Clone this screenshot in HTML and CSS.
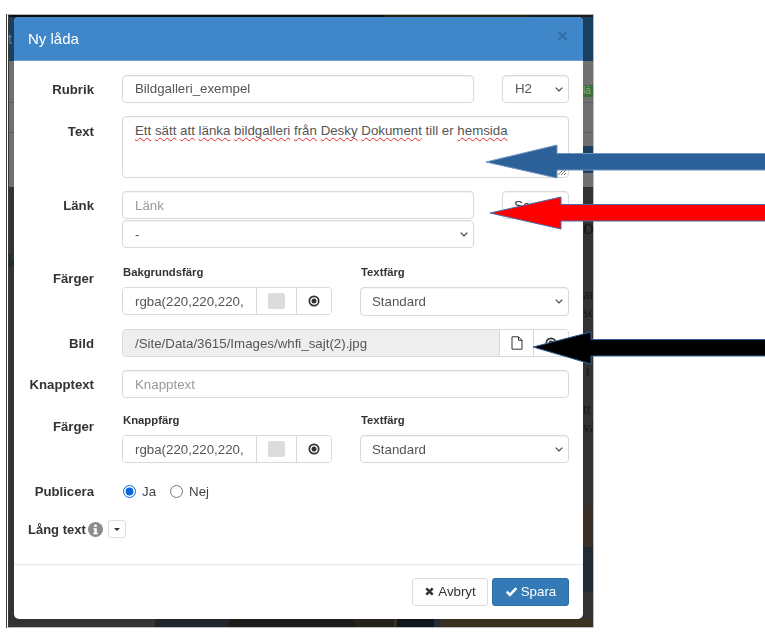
FILE: index.html
```html
<!DOCTYPE html>
<html lang="sv">
<head>
<meta charset="utf-8">
<title>Ny låda</title>
<link rel="stylesheet" href="styles.css">
</head>
<body>
<div class="shot">
  <div class="ghost ghost-green">lä</div>
  <div class="ghost ghost-navy"></div>
  <div class="ghost ghost-line ghost-line-a"></div>
  <div class="ghost ghost-line ghost-line-b"></div>
  <span class="ghost ghost-t ghost-head">t</span>
  <span class="ghost ghost-t ghost-k">k</span>
  <span class="ghost ghost-t ghost-ol">ol</span>
  <span class="ghost ghost-t ghost-an">an</span>
  <span class="ghost ghost-t ghost-sc">sc</span>
  <span class="ghost ghost-t ghost-t1">t</span>
  <span class="ghost ghost-t ghost-tt">tt</span>
  <span class="ghost ghost-t ghost-va">vå</span>

  <div class="modal">
    <header class="modal-head">
      <h1 class="modal-title">Ny låda</h1>
      <span class="close">×</span>
    </header>
    <form class="modal-body">
      <div class="row row-first">
        <label class="lbl">Rubrik</label>
        <div class="split">
          <input class="ctl grow" type="text" value="Bildgalleri_exempel">
          <select class="ctl sel side"><option>H2</option></select>
        </div>
      </div>
      <div class="row">
        <label class="lbl lbl-text">Text</label>
        <div class="ctl area">
          <span class="sq">Ett</span> <span class="sq">sätt</span> <span class="sq">att</span> <span class="sq">länka</span> <span class="sq">bildgalleri</span> <span class="sq">från</span> <span class="sq">Desky</span> <span class="sq">Dokument</span> till er <span class="sq">hemsida</span>
          <svg class="grip" viewBox="0 0 10 10"><path d="M1 9 9 1M4 9 9 4M7 9 9 7" stroke="#777" fill="none"/></svg>
        </div>
      </div>
      <div class="row row-link">
        <label class="lbl">Länk</label>
        <div class="stack">
          <div class="split">
            <input class="ctl grow" type="text" placeholder="Länk">
            <button class="ctl btn side" type="button">Se mer</button>
          </div>
          <div class="split">
            <select class="ctl sel grow"><option>-</option></select>
            <span class="side-gap"></span>
          </div>
        </div>
      </div>
      <div class="row">
        <label class="lbl lbl-col">Färger</label>
        <div class="pair">
          <div class="pair-a">
            <div class="small">Bakgrundsfärg</div>
            <div class="group tall">
              <input class="seg seg-text" type="text" value="rgba(220,220,220,">
              <span class="seg seg-swatch"><i class="swatch"></i></span>
              <span class="seg seg-icon"><svg class="ic" viewBox="0 0 12 12"><circle cx="6" cy="6" r="4.700" fill="none" stroke="#333" stroke-width="1.700"/><circle cx="6" cy="6" r="2.500" fill="#333"/></svg></span>
            </div>
          </div>
          <div class="pair-b">
            <div class="small">Textfärg</div>
            <select class="ctl sel tall"><option>Standard</option></select>
          </div>
        </div>
      </div>
      <div class="row">
        <label class="lbl">Bild</label>
        <div class="group">
          <input class="seg seg-path" type="text" value="/Site/Data/3615/Images/whfi_sajt(2).jpg" disabled>
          <span class="seg seg-file"><svg class="ic-file" viewBox="0 0 12 14"><path d="M1 .8h6.500L11 4.300V13.200H1zM7.500.8V4.300H11" fill="none" stroke="#333"/></svg></span>
          <span class="seg seg-icon"><svg class="ic" viewBox="0 0 12 12"><circle cx="6" cy="6" r="4.700" fill="none" stroke="#333" stroke-width="1.700"/><circle cx="6" cy="6" r="2.500" fill="#333"/></svg></span>
        </div>
      </div>
      <div class="row">
        <label class="lbl">Knapptext</label>
        <input class="ctl" type="text" placeholder="Knapptext">
      </div>
      <div class="row row-shift">
        <label class="lbl lbl-col">Färger</label>
        <div class="pair">
          <div class="pair-a">
            <div class="small">Knappfärg</div>
            <div class="group">
              <input class="seg seg-text" type="text" value="rgba(220,220,220,">
              <span class="seg seg-swatch"><i class="swatch"></i></span>
              <span class="seg seg-icon"><svg class="ic" viewBox="0 0 12 12"><circle cx="6" cy="6" r="4.700" fill="none" stroke="#333" stroke-width="1.700"/><circle cx="6" cy="6" r="2.500" fill="#333"/></svg></span>
            </div>
          </div>
          <div class="pair-b">
            <div class="small">Textfärg</div>
            <select class="ctl sel"><option>Standard</option></select>
          </div>
        </div>
      </div>
      <div class="row row-radio">
        <label class="lbl lbl-radio">Publicera</label>
        <div class="radios">
          <label class="radio"><input type="radio" name="pub" checked> Ja</label>
          <label class="radio"><input type="radio" name="pub"> Nej</label>
        </div>
      </div>
      <div class="long">
        <span class="long-label">Lång text</span>
        <svg class="ic-info" viewBox="0 0 14 14"><circle cx="7" cy="7" r="7" fill="#8c8c8c"/><rect x="5.800" y="2.400" width="2.400" height="2.200" fill="#fff"/><path d="M4.900 5.800h3.300v4.300h1v1.300H4.900v-1.300h1V7.100h-1z" fill="#fff"/></svg>
        <button class="caret-btn" type="button"><i class="caret"></i></button>
      </div>
    </form>
    <footer class="modal-foot">
      <button class="fbtn fbtn-light" type="button"><svg class="ic-x" viewBox="0 0 12 12"><path d="M2.500 2.500 9.500 9.500M9.500 2.500 2.500 9.500" stroke="#333" stroke-width="2.800" fill="none"/></svg>Avbryt</button>
      <button class="fbtn fbtn-blue" type="button"><svg class="ic-check" viewBox="0 0 14 12"><path d="M1.800 6.200 5.300 9.700 12.300 2.300" stroke="#fff" stroke-width="2.800" fill="none"/></svg>Spara</button>
    </footer>
  </div>
</div>
<svg class="arrows" viewBox="0 0 765 641">
  <path d="M766 153.500H557V145L486 162 557 178V170H766z" fill="#2c6099" stroke="#6f93c0"/>
  <path d="M766 204.500H561V197L490 213 561 229V221H766z" fill="#f00" stroke="#4a6aa8"/>
  <path d="M766 339.500H591V332L533 347 591 364V356H766z" fill="#000" stroke="#2f5f95"/>
</svg>
</body>
</html>
```

FILE: styles.css
```css
* { box-sizing: border-box; }
html, body { margin: 0; padding: 0; }
body {
  position: relative;
  width: 765px;
  height: 641px;
  overflow: hidden;
  background: #fff;
  font-family: "Liberation Sans", Arial, sans-serif;
  font-size: 13.3px;
  color: #555;
}
.shot {
  position: relative;
  width: 588px;
  height: 614px;
  margin: 14px 0 0 6px;
  padding: 2px 10px 8px 5px;
  border-style: solid;
  border-color: #b5b5b5 #bdbdbd #bdbdbd #3a3a3a;
  border-width: 1px 1px 1px 3px;
  border-left-style: double;
  background-clip: padding-box;
  background-color: #333;
  background-image:
    linear-gradient(90deg, #0e0e0e 0 375px, #2a2010 375px 520px, #1a1a18 520px),
    linear-gradient(90deg, #333 0 146px, #20262c 146px 220px, #1c1c1c 220px 345px, #24221a 345px 385px, #383022 385px 388px, #10161a 388px 425px, #252f33 425px 432px, #3a3122 432px),
    linear-gradient(#3a3028, #3a3028),
    linear-gradient(#1f2c36, #1f2c36),
    linear-gradient(#1b3f60, #1b3f60),
    linear-gradient(#707070, #707070);
  background-repeat: no-repeat;
  background-size: 100% 2px, 100% 8px, 10px 42px, 10px 45px, 100% 44px, 100% 126px;
  background-position: 0 0, 0 100%, 100% 490px, 100% 532px, 0 2px, 0 46px;
  filter: blur(0.35px);
}
.ghost { position: absolute; }
.ghost-green {
  right: 0; top: 70px; width: 10px; height: 12px;
  background: #3b6e3b; color: #8fb08f; font-size: 10px; line-height: 12px; overflow: hidden; white-space: nowrap;
}
.ghost-navy { right: 0; top: 131px; width: 10px; height: 27px; background: #1b3f60; }
.ghost-line { left: 0; right: 0; height: 1px; background: #5f5f5f; }
.ghost-line-a { top: 87px; }
.ghost-line-b { top: 117px; }
.ghost-t { font-family: "Liberation Serif", serif; color: #161616; line-height: 1; overflow: hidden; }
.ghost-head { left: -1px; top: 16px; font-family: "Liberation Sans", sans-serif; font-size: 15px; color: #5f7f9c; }
.ghost-k { left: -1px; top: 239px; font-size: 16px; font-weight: bold; color: #1b2a30; }
.ghost-ol { right: 0; top: 201px; width: 10px; font-size: 22px; white-space: nowrap; }
.ghost-an { right: 0; top: 273px; width: 10px; font-size: 14px; white-space: nowrap; }
.ghost-sc { right: 0; top: 291px; width: 10px; font-size: 14px; white-space: nowrap; }
.ghost-t1 { right: 3px; top: 350px; font-size: 14px; }
.ghost-tt { right: 0; top: 388px; width: 10px; font-size: 14px; white-space: nowrap; }
.ghost-va { right: 0; top: 406px; width: 10px; font-size: 14px; white-space: nowrap; }

.modal {
  display: flex;
  flex-direction: column;
  position: relative;
  width: 569px;
  height: 602px;
  background: #fff;
  border-radius: 5px;
  overflow: hidden;
}
.modal-head {
  display: flex;
  justify-content: space-between;
  height: 44px;
  padding: 0 15px 0 14px;
  flex: none;
  background: #3f87c8;
  border-bottom: 1px solid #6fa4d6;
}
.modal-title { margin: 0; font-size: 15px; font-weight: normal; line-height: 43px; color: #fff; }
.close { font-size: 19px; font-weight: bold; line-height: 37px; color: #2f6ea6; }
.modal-body { flex: 1; padding: 14px 14px 0 0; }
.row {
  display: grid;
  grid-template-columns: 80px 1fr;
  column-gap: 28px;
  margin-bottom: 13px;
}
.row-link { margin-bottom: 17px; }
.row-shift { padding-top: 2px; }
.row-radio { margin-bottom: 19px; align-items: center; height: 20px; margin-top: 18px; }
.lbl { padding-top: 7px; font-weight: bold; font-size: 13.2px; line-height: 15px; text-align: right; color: #333; white-space: nowrap; }
.lbl-text { padding-top: 8px; }
.lbl-col { padding-top: 6px; }
.lbl-radio { padding-top: 0; }
.stack { display: flex; flex-direction: column; gap: 1px; }
.split { display: flex; gap: 28px; }
.grow { flex: 1; min-width: 0; }
.side-gap { width: 67px; flex: none; }
.ctl {
  display: block;
  width: 100%;
  height: 28px;
  padding: 0 12px;
  border: 1px solid #d9d9d9;
  border-radius: 4px;
  background: #fff;
  font: 13.3px "Liberation Sans", Arial, sans-serif;
  color: #555;
  outline: 0;
  box-shadow: inset 0 1px 1px rgba(0,0,0,.05);
}
.split .side { width: 67px; flex: none; }
.row-first .ctl { padding-bottom: 2px; }
.ctl::placeholder, .seg::placeholder { color: #999; }
.sel {
  appearance: none;
  -webkit-appearance: none;
  background-image: url("data:image/svg+xml,%3Csvg xmlns='http://www.w3.org/2000/svg' width='8' height='5'%3E%3Cpath d='M.7.7 4 4 7.300.7' fill='none' stroke='%23444' stroke-width='1.200'/%3E%3C/svg%3E");
  background-repeat: no-repeat;
  background-position: right 5px center;
}
.pair-b .ctl { padding-left: 11px; }
.tall { height: 29px; }
.area {
  position: relative;
  height: 62px;
  padding: 6px 12px;
  line-height: 16px;
}
.sq { text-decoration: underline wavy #e0262a 1px; text-underline-offset: 2px; text-decoration-skip-ink: none; }
.grip { position: absolute; right: 1px; bottom: 1px; width: 10px; height: 10px; }
.btn { padding: 0; text-align: center; color: #333; }
.pair { display: flex; }
.pair-a { width: 210px; flex: none; }
.pair-b { margin-left: 28px; flex: 1; min-width: 0; }
.small { height: 22px; padding: 1px 0 0 1px; font-size: 11.300px; font-weight: bold; line-height: 13px; color: #333; }
.group {
  display: flex;
  height: 28px;
  border: 1px solid #d9d9d9;
  border-radius: 4px;
  overflow: hidden;
  background: #fff;
}
.seg {
  display: flex;
  align-items: center;
  justify-content: center;
  flex: none;
  height: 100%;
  border: 0;
  border-left: 1px solid #d9d9d9;
  background: #fff;
  font: 13.3px "Liberation Sans", Arial, sans-serif;
  color: #555;
  outline: 0;
}
.seg:first-child { border-left: 0; }
.seg-text { width: 133px; padding: 0 0 0 12px; }
.seg-swatch { width: 40px; }
.seg-icon { flex: 1; }
.seg-path { width: 376px; padding: 0 0 0 12px; background: #eee; color: #555; }
.seg-file { width: 34px; }
.swatch { display: block; width: 17px; height: 16px; background: #dcdcdc; border-radius: 2px; }
.ic { width: 12px; height: 12px; }
.ic-file { width: 12px; height: 14px; }
.radios { display: flex; gap: 14px; padding-left: 1px; }
.radio { display: flex; align-items: center; gap: 6px; color: #444; }
.radio input { margin: 0; width: 13px; height: 13px; accent-color: #0a66dc; }
.long { display: flex; align-items: center; height: 18px; padding-left: 14px; }
.long-label { font-weight: bold; font-size: 13px; color: #333; }
.ic-info { width: 15px; height: 15px; margin-left: 2px; }
.caret-btn {
  display: flex; align-items: center; justify-content: center;
  width: 18px; height: 18px; margin-left: 5px; padding: 0;
  border: 1px solid #ddd; border-radius: 3px; background: #fff;
}
.caret { display: block; border-top: 3px solid #333; border-left: 3px solid transparent; border-right: 3px solid transparent; }
.modal-foot {
  display: flex;
  justify-content: flex-end;
  gap: 4px;
  height: 55px;
  padding: 13px 14px 13px 0;
  flex: none;
  border-top: 1px solid #e6e6e6;
}
.fbtn {
  display: flex; align-items: center; justify-content: center; gap: 3px;
  height: 28px; padding: 0 0 1px;
  border-radius: 3px;
  font: 13.3px "Liberation Sans", Arial, sans-serif;
}
.fbtn-light { width: 76px; background: #fff; border: 1px solid #ddd; color: #333; }
.fbtn-blue { width: 77px; background: #337ab7; border: 1px solid #2e6da4; color: #fff; }
.ic-x { width: 11px; height: 11px; }
.ic-check { width: 13px; height: 11px; }
.arrows { position: absolute; left: 0; top: 0; width: 765px; height: 641px; pointer-events: none; }
```
